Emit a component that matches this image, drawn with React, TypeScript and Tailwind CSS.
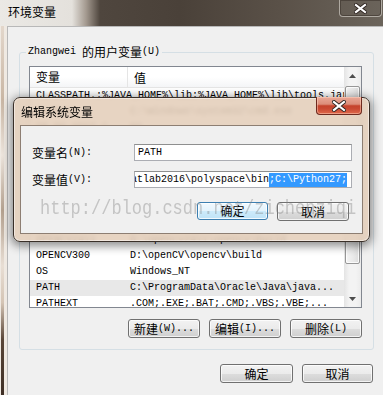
const zh = "font-['Noto_Sans_CJK_SC',sans-serif] text-[12px] leading-[14px]";
const en = "font-['Liberation_Mono',monospace] text-[10px] leading-[14px]";

const rows: [string, string][] = [
  ["CLASSPATH", ".;%JAVA_HOME%\\lib;%JAVA_HOME%\\lib\\tools.jar"],
  ["ComSpec", "C:\\Windows\\system32\\cmd.exe"],
  ["FP_NO_HOST_C...", "NO"],
  ["JAVA_HOME", "C:\\Program Files\\Java\\jdk1.8.0_101"],
  ["MATLAB", "C:\\Program Files\\MATLAB\\R2016a"],
  ["NUMBER_OF_P...", "4"],
  ["OPENCV", "D:\\openCV\\opencv"],
  ["OPENCV_DIR", "D:\\openCV\\opencv\\build\\x64\\vc12"],
  ["OPENCV2410", "D:\\opencv2410\\opencv\\build"],
  ["OPENCV2411", "D:\\opencv2411\\opencv\\build"],
  ["OPENCV300", "D:\\openCV\\opencv\\build"],
  ["OS", "Windows_NT"],
  ["PATH", "C:\\ProgramData\\Oracle\\Java\\java..."],
  ["PATHEXT", ".COM;.EXE;.BAT;.CMD;.VBS;.VBE;..."],
];

const grayBtn =
  "flex h-[19px] items-center justify-center rounded-[3px] border border-[#707070] bg-[linear-gradient(180deg,#f2f2f2_0%,#ebebeb_50%,#dddddd_51%,#cfcfcf_100%)] text-black shadow-[inset_0_0_0_1px_rgba(255,255,255,0.75)]";
const blueBtn =
  "flex h-[18px] items-center justify-center rounded-[3px] border border-[#3c7fb1] bg-[linear-gradient(180deg,#f1f9fe_0%,#e3f3fc_50%,#cdebfb_51%,#bfe3f7_100%)] text-black shadow-[inset_0_0_0_1px_rgba(255,255,255,0.8)]";

function CloseX({ w = 10, h = 8 }: { w?: number; h?: number }) {
  return (
    <svg width={w + 4} height={h + 4} viewBox={`-2 -2 ${w + 4} ${h + 4}`}>
      <path d={`M0 0 L${w} ${h} M${w} 0 L0 ${h}`} stroke="#2e2420" strokeWidth={4} strokeLinecap="square" />
      <path d={`M0 0 L${w} ${h} M${w} 0 L0 ${h}`} stroke="#ffffff" strokeWidth={2.2} strokeLinecap="square" />
    </svg>
  );
}

function Arrow({ up }: { up?: boolean }) {
  return (
    <svg width="7" height="4" viewBox="0 0 7 4">
      <path d={up ? "M0 4 L3.5 0 L7 4 Z" : "M0 0 L3.5 4 L7 0 Z"} fill="#4d4d4d" />
    </svg>
  );
}

function ListView() {
  return (
    <div className="flex h-[242px] w-[333px] border border-[#828790] bg-white">
      <div className="flex flex-1 flex-col overflow-hidden">
        <div className="flex h-[21px] shrink-0 items-center border-b border-[#e5e5e5] bg-[linear-gradient(180deg,#ffffff_0%,#ffffff_50%,#f4f5f7_100%)]">
          <div className="flex h-full w-[98px] items-center border-r border-[#e5e5e5] pl-[6px]">
            <span className={zh}>变量</span>
          </div>
          <div className="pl-[6px]">
            <span className={zh}>值</span>
          </div>
        </div>
        {rows.map(([k, v]) => (
          <div
            key={k}
            className={`flex h-[16px] shrink-0 items-center whitespace-nowrap text-black ${k === "PATH" ? "bg-[#e8e8e8]" : ""}`}
          >
            <span className={`${en} w-[100px] pl-[6px]`}>{k}</span>
            <span className={en}>{v}</span>
          </div>
        ))}
      </div>
      <div className="flex w-[17px] flex-col bg-[linear-gradient(90deg,#e4e4e4_0%,#f3f3f3_30%,#f3f3f3_70%,#ebebeb_100%)]">
        <div className="flex h-[17px] items-center justify-center">
          <Arrow up />
        </div>
        <div className="flex-1">
          <div className="mx-[1px] mt-[2px] h-[178px] rounded-[2px] border border-[#979797] bg-[linear-gradient(90deg,#f4f4f4_0%,#e8e8e8_60%,#dcdcdc_100%)] shadow-[inset_0_0_0_1px_rgba(255,255,255,0.8)]" />
        </div>
        <div className="flex h-[17px] items-center justify-center">
          <Arrow />
        </div>
      </div>
    </div>
  );
}

function EditDialog() {
  return (
    <div className="absolute left-[13px] top-[97px] flex h-[145px] w-[357px] flex-col rounded-[7px] border border-[#3a3029] bg-[#e4cfbb]/90 px-[6px] pb-[7px] shadow-[0_2px_10px_2px_rgba(0,0,0,0.45),inset_0_0_0_1px_rgba(255,255,255,0.45)] backdrop-blur-[2px]">
      <div className="flex h-[27px] shrink-0 items-start justify-between">
        <span className={`${zh} mt-[7px] pl-[1px] text-black`}>编辑系统变量</span>
        <div className="-mt-px mr-px flex h-[18px] w-[46px] items-center justify-center rounded-b-[4px] border border-t-0 border-[#6e2a1f] bg-[linear-gradient(180deg,#eaa897_0%,#dc8e7a_42%,#c5432c_52%,#c94a33_70%,#e0694b_100%)] shadow-[inset_0_0_0_1px_rgba(255,220,200,0.45)]">
          <CloseX />
        </div>
      </div>
      <div className="flex flex-1 flex-col border border-[#8d7e72] bg-[#f0f0f0]">
        <div className="mt-[18px] flex h-[17px] items-center">
          <div className="flex w-[113px] items-center pl-[11px] text-black">
            <span className={zh}>变量名</span>
            <span className={en}>(N):</span>
          </div>
          <div className="flex h-[17px] w-[218px] items-center border border-[#abadb3] border-t-[#8e8f8f] bg-white pl-[3px]">
            <span className={`${en} text-black`}>PATH</span>
          </div>
        </div>
        <div className="mt-[10px] flex h-[17px] items-center">
          <div className="flex w-[113px] items-center pl-[11px] text-black">
            <span className={zh}>变量值</span>
            <span className={en}>(V):</span>
          </div>
          <div className="flex h-[17px] w-[218px] items-center justify-end overflow-hidden whitespace-nowrap border border-[#abadb3] border-t-[#8e8f8f] bg-white pr-[4px]">
            <span className={`${en} text-black`}>D:\matlab2016\polyspace\bin</span>
            <span className={`${en} bg-[#3399ff] text-white`}>;C:\Python27;</span>
            <span className="h-[14px] w-px bg-[#e07a10]" />
          </div>
        </div>
        <div className="mt-[14px] flex justify-end gap-[9px] pr-[13px]">
          <div className={`${blueBtn} w-[71px]`}>
            <span className={zh}>确定</span>
          </div>
          <div className={`${grayBtn} h-[18px] w-[72px]`}>
            <span className={zh}>取消</span>
          </div>
        </div>
      </div>
    </div>
  );
}

export default function App() {
  return (
    <div className="relative h-[395px] w-[383px] overflow-hidden bg-[#6b635a]">
      <div className="flex h-[26px] items-start justify-between bg-[linear-gradient(90deg,#ebe9e5_0px,#e4e1dc_72px,#a49a90_86px,#4f463e_100px,#4a4139_180px,#5a5148_280px,#6b645b_383px)]">
        <span className={`${zh} ml-[8px] mt-[5px] text-black`}>环境变量</span>
        <div className="mr-px flex h-[17px] w-[43px] items-center justify-center rounded-b-[4px] border border-t-0 border-[#cfcac4]/70 shadow-[inset_0_0_0_1px_rgba(60,52,45,0.6)]">
          <CloseX w={9} h={7} />
        </div>
      </div>
      <div className="flex h-[369px]">
        <div className="flex w-[7px] bg-[#efe9e2]">
          <div className="ml-[1px] w-[3px] bg-[linear-gradient(180deg,#e3d7cb_0%,#c9b6a4_20%,#eee6de_35%,#b5a290_50%,#e8ded4_65%,#d4c4b4_75%,#5a4638_85%,#3e2f25_100%)]" />
        </div>
        <div className="flex-1 border-l border-t border-[#b8b8b8] bg-[#f0f0f0]">
          <fieldset className="ml-[11px] mt-[18px] h-[305px] w-[355px] rounded-[3px] border border-[#d5dfe5]">
            <legend className="ml-[6px] flex items-center px-[2px] text-black">
              <span className={en}>Zhangwei&nbsp;</span>
              <span className={zh}>的用户变量</span>
              <span className={en}>(U)</span>
            </legend>
            <div className="ml-[9px] mt-[7px]">
              <ListView />
              <div className="mt-[11px] flex w-[333px] justify-end gap-[9px]">
                <div className={`${grayBtn} w-[72px]`}>
                  <span className={zh}>新建</span>
                  <span className={en}>(W)...</span>
                </div>
                <div className={`${grayBtn} w-[72px]`}>
                  <span className={zh}>编辑</span>
                  <span className={en}>(I)...</span>
                </div>
                <div className={`${grayBtn} w-[72px]`}>
                  <span className={zh}>删除</span>
                  <span className={en}>(L)</span>
                </div>
              </div>
            </div>
          </fieldset>
          <div className="ml-[11px] mt-[14px] flex w-[354px] justify-end gap-[9px]">
            <div className={`${grayBtn} w-[73px]`}>
              <span className={zh}>确定</span>
            </div>
            <div className={`${grayBtn} w-[71px]`}>
              <span className={zh}>取消</span>
            </div>
          </div>
        </div>
      </div>
      <EditDialog />
      <div className="pointer-events-none absolute left-[40px] top-[197px] origin-top scale-y-[1.2] whitespace-nowrap font-['Liberation_Mono',monospace] text-[17px] leading-[20px] text-[rgba(130,130,130,0.4)]">
        http://blog.csdn.net/zichenziqi
      </div>
    </div>
  );
}
